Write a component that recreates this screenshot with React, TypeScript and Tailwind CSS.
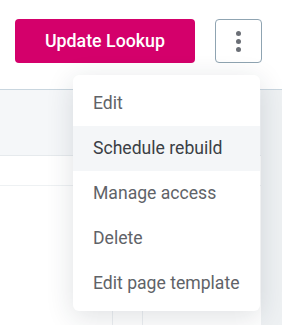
import React from "react";

const items = ["Edit", "Schedule rebuild", "Manage access", "Delete", "Edit page template"];

export default function App() {
  return (
    <div
      className="relative w-[282px] h-[325px] overflow-hidden bg-white"
      style={{ fontFamily: "Roboto, 'Noto Sans', sans-serif" }}
    >
      {/* header bar */}
      <div className="h-[90px] flex items-start justify-end gap-5 pt-[19px] pr-5 pl-[15px] border-b border-[#c9d6df]">
        <button className="w-[180px] h-[44px] rounded-[4px] bg-[#d4006b] text-white text-[17.8px] font-medium">
          Update Lookup
        </button>
        <button className="w-[47px] h-[44px] rounded-[4px] border border-[#8fa4b2] bg-white flex flex-col items-center justify-center gap-[3px]">
          <span className="w-[5px] h-[5px] rounded-full bg-[#6b6f76]" />
          <span className="w-[5px] h-[5px] rounded-full bg-[#6b6f76]" />
          <span className="w-[5px] h-[5px] rounded-full bg-[#6b6f76]" />
        </button>
      </div>
      {/* table */}
      <div className="flex">
        <div className="w-[261px]">
          <div className="h-[66px] bg-[#f5f7f9] border-b border-[#e6eaed]" />
          <div className="h-[30px] border-b border-[#eef1f3]" />
          <div className="h-[140px] flex">
            <div className="w-[113px] border-r border-[#eceff2]" />
            <div className="w-[30px] border-r border-[#eceff2]" />
          </div>
        </div>
        <div className="flex-1 h-[240px] bg-[#eef1f3]" />
      </div>
      {/* menu */}
      <div className="absolute left-[73px] top-[75px] w-[187px] rounded-[6px] bg-white pt-[6px] pb-[5px] shadow-[0_6px_28px_rgba(30,40,60,0.14)]">
        {items.map((t, i) => (
          <div
            key={t}
            className={
              i === 1
                ? "h-[45px] flex items-center pl-5 text-[17.6px] text-[#3b3f45] bg-[#f4f6f8]"
                : "h-[45px] flex items-center pl-5 text-[17.6px] text-[#5f6368]"
            }
          >
            {t}
          </div>
        ))}
      </div>
    </div>
  );
}
